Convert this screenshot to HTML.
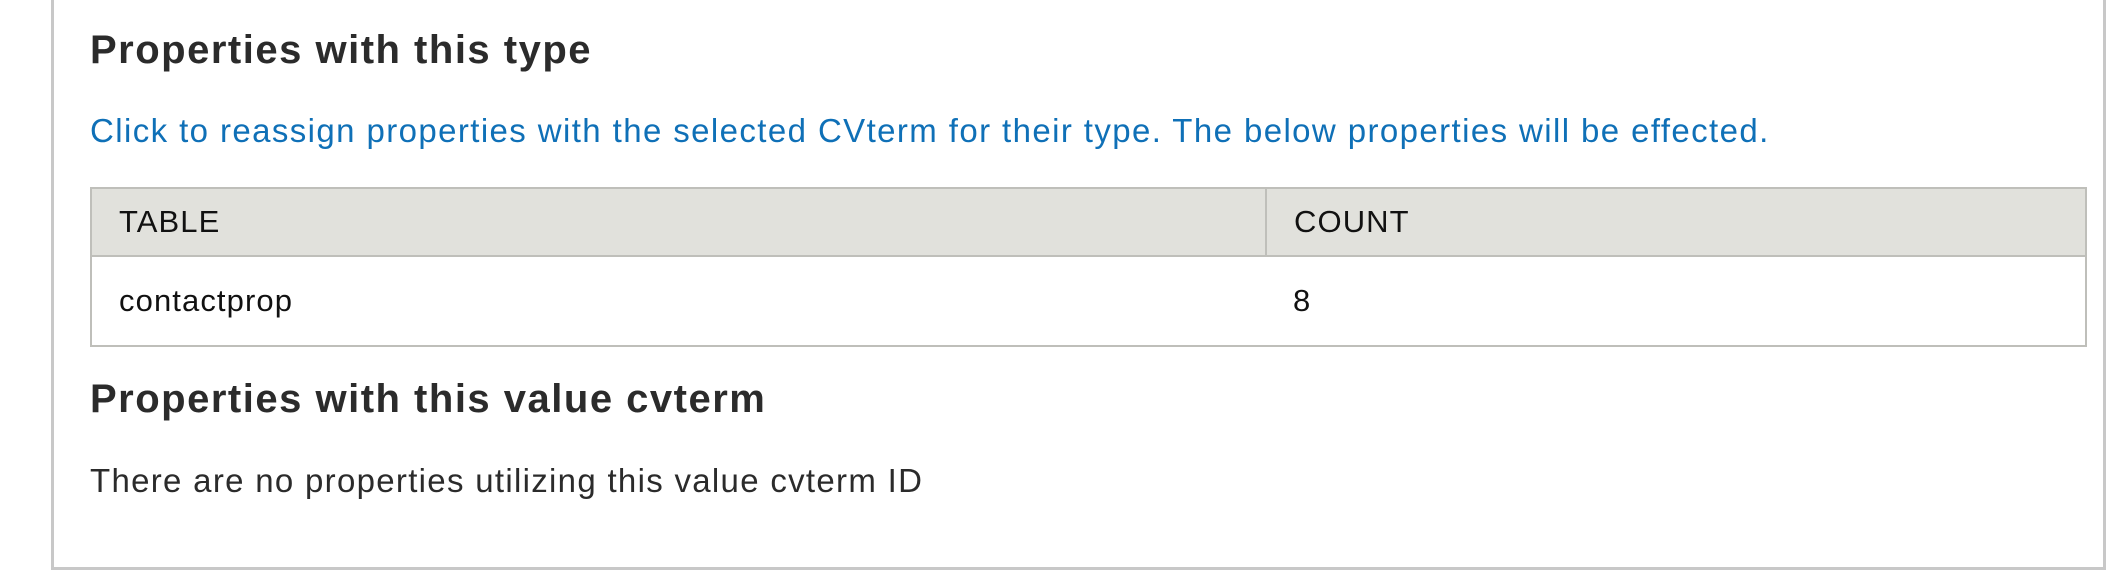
<!DOCTYPE html>
<html><head><style>
html,body{margin:0;padding:0;background:#fff;width:2126px;height:577px;overflow:hidden;font-family:"Liberation Sans",sans-serif;}
.box{position:absolute;left:51px;top:-5px;width:2055px;height:575px;border:3px solid #c8c8c8;border-top:none;box-sizing:border-box;}
h2{position:absolute;left:90px;margin:0;font-size:40px;line-height:46px;font-weight:bold;color:#2b2b2b;white-space:nowrap;letter-spacing:1.5px;}
.link{position:absolute;left:90px;top:112px;font-size:33px;line-height:38px;color:#0f70b7;white-space:nowrap;letter-spacing:1.4px;}
table{position:absolute;left:90px;top:187px;width:1997px;border-collapse:collapse;font-size:31px;color:#111;letter-spacing:1.1px;}
th{background:#e1e1dc;font-weight:normal;text-align:left;height:66px;padding:0 0 0 27px;border:2px solid #bfbfba;}
td{height:88px;padding:0 0 0 27px;border:2px solid #bfbfba;}
td:first-child{border-right:none}td:last-child{border-left:none}
.p{position:absolute;left:90px;top:462px;font-size:33px;line-height:38px;color:#2b2b2b;white-space:nowrap;letter-spacing:1.3px;}
</style></head><body>
<div class="box"></div>
<h2 style="top:27px">Properties with this type</h2>
<div class="link">Click to reassign properties with the selected CVterm for their type. The below properties will be effected.</div>
<table><tr><th style="width:1146px">TABLE</th><th>COUNT</th></tr>
<tr><td>contactprop</td><td>8</td></tr></table>
<h2 style="top:376px">Properties with this value cvterm</h2>
<div class="p">There are no properties utilizing this value cvterm ID</div>
</body></html>
